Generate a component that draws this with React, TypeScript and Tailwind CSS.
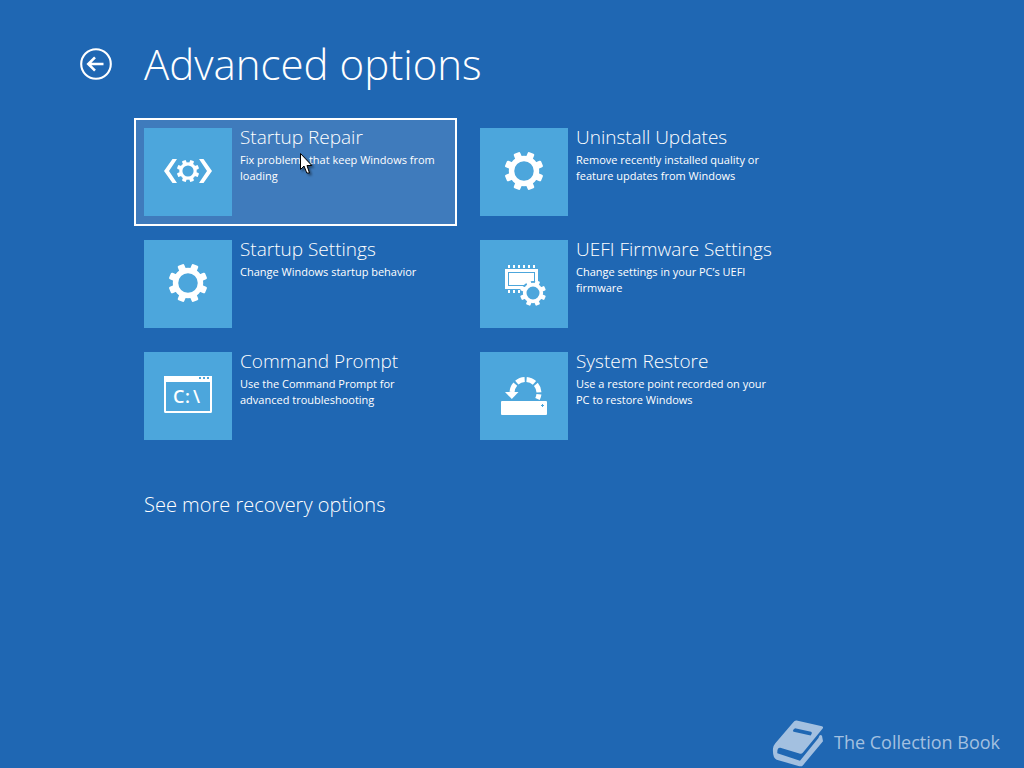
import React from "react";

interface GearProps {
  cx: number;
  cy: number;
  size: number;
}

// Eight-toothed gear, "size" is the radius to the tip of a tooth
function Gear({ cx, cy, size }: GearProps) {
  const teeth = [22.5, 67.5, 112.5, 157.5, 202.5, 247.5, 292.5, 337.5];
  return (
    <g transform={`translate(${cx} ${cy}) scale(${size / 20})`}>
      <circle r="12.8" fill="none" stroke="white" strokeWidth="5.6" />
      {teeth.map((angle) => (
        <rect
          key={angle}
          x="-3.6"
          y="-20"
          width="7.2"
          height="8"
          rx="1.4"
          fill="white"
          transform={`rotate(${angle})`}
        />
      ))}
    </g>
  );
}

function RepairIcon() {
  return (
    <>
      <path d="M20 43 28.500 31H33L25 43 33 55H28.500Z" fill="white" />
      <path d="M68 43 59.500 31H55L63 43 55 55H59.500Z" fill="white" />
      <Gear cx={44} cy={43} size={11.2} />
    </>
  );
}

function FirmwareIcon() {
  return (
    <>
      <rect x="25" y="29" width="33" height="20" fill="white" />
      <rect x="28.500" y="32.500" width="26" height="13" fill="none" stroke="#4ca6dc" />
      {[28, 33, 38, 43, 48, 53].map((x) => (
        <rect key={x} x={x} y="25" width="2" height="3" fill="white" />
      ))}
      {[28, 33, 38].map((x) => (
        <rect key={x} x={x} y="50" width="2" height="3" fill="white" />
      ))}
      <circle cx="53" cy="53" r="12" fill="#4ca6dc" />
      <Gear cx={53} cy={53} size={13} />
    </>
  );
}

function PromptIcon() {
  return (
    <>
      <rect x="21" y="25" width="46" height="35" rx="0.5" fill="none" stroke="white" strokeWidth="2" />
      <rect x="20" y="24" width="48" height="6" fill="white" />
      {[55, 59, 63].map((x) => (
        <rect key={x} x={x} y="25" width="2" height="2" fill="#4ca6dc" />
      ))}
      <text x="29 41 49" y="51" className="fill-white font-['Open_Sans'] text-[18px] font-semibold">
        C:\
      </text>
    </>
  );
}

function RestoreIcon() {
  return (
    <>
      <path
        d="M32 41A13.500 13.500 0 0 1 59 41Q59 44 57.500 47"
        fill="none"
        stroke="white"
        strokeWidth="5"
        strokeDasharray="8.600 2"
        strokeDashoffset="-1"
      />
      <path d="M25 40H38.500L31.800 47Z" fill="white" />
      <rect x="21" y="49" width="46" height="14" rx="1" fill="white" />
      <path d="M62.500 52V55M61 53.500H64" stroke="#4ca6dc" />
    </>
  );
}

const options = [
  {
    title: "Startup Repair",
    description: "Fix problems that keep Windows from loading",
    icon: <RepairIcon />,
    selected: true,
  },
  {
    title: "Uninstall Updates",
    description: "Remove recently installed quality or feature updates from Windows",
    icon: <Gear cx={44} cy={43} size={19.5} />,
  },
  {
    title: "Startup Settings",
    description: "Change Windows startup behavior",
    icon: <Gear cx={44} cy={43} size={19.5} />,
  },
  {
    title: "UEFI Firmware Settings",
    description: "Change settings in your PC’s UEFI firmware",
    icon: <FirmwareIcon />,
  },
  {
    title: "Command Prompt",
    description: "Use the Command Prompt for advanced troubleshooting",
    icon: <PromptIcon />,
  },
  {
    title: "System Restore",
    description: "Use a restore point recorded on your PC to restore Windows",
    icon: <RestoreIcon />,
  },
];

export default function App() {
  return (
    <div className="relative flex min-h-screen flex-col bg-[#1f67b3] font-['Open_Sans',sans-serif] text-white">
      <header className="flex items-center gap-8 px-20 pt-9">
        <button type="button" aria-label="Back" className="size-8 shrink-0">
          <svg viewBox="0 0 32 32" className="size-8" fill="none" stroke="white">
            <circle cx="16" cy="16" r="14.800" strokeWidth="2.100" />
            <path d="M8.500 16H23.500M15 9.300 8.300 16 15 22.700" strokeWidth="2.600" />
          </svg>
        </button>
        <h1 className="text-[42px] leading-14 font-light">Advanced options</h1>
      </header>

      <main className="pr-6 pl-[134px]">
        <div className="mt-[26px] flex max-w-[700px] flex-wrap gap-x-[13px] gap-y-1">
          {options.map((option) => (
            <button
              key={option.title}
              type="button"
              className={`flex w-[323px] items-start gap-2 border-2 p-2 text-left ${
                option.selected ? "border-white bg-[#3f7bbc]" : "border-transparent"
              }`}
            >
              <svg viewBox="0 0 88 88" className="size-22 shrink-0 bg-[#4ca6dc]">
                {option.icon}
              </svg>
              <span className="-mt-1 flex flex-col gap-0.5 pr-2">
                <span className="text-[19px] leading-[26px] font-light whitespace-nowrap">{option.title}</span>
                <span className="text-[11px] leading-4">{option.description}</span>
              </span>
            </button>
          ))}
        </div>
        <a href="#more" className="mt-10 ml-2.5 inline-block text-[20px] leading-[30px] font-light">
          See more recovery options
        </a>
      </main>

      <footer className="mt-auto flex items-start justify-end gap-2.5 pr-6 text-[#a3c0e0]">
        <svg viewBox="24 26 156 146" className="h-[49px] w-[52px]">
          <path
            fill="currentColor"
            d="M98 30 174 47Q179 49 176 54L117 126Q113 131 106 129L49 112Q39 111 40 128L108 151 164 82V80Q168 70 174 76L177 92 117 164Q113 169 106 167L38 148Q25 142 27 114Q28 105 34 98L88 35Q92 29 98 30Z"
          />
          <path fill="#1f67b3" d="M93 53 141 64Q145 66 143 70L140 75 89 64Q85 62 88 58Z" />
        </svg>
        <span className="text-[18px] leading-[46px]">The Collection Book</span>
      </footer>

      {/* Mouse pointer */}
      <svg viewBox="0 0 16 24" className="pointer-events-none absolute top-[153px] left-[300px] h-6 w-4 drop-shadow-[2px_2px_1px_rgba(0,0,0,0.4)]">
        <path d="M0.500 0.500V16.500L4 13 6.800 20H9.500L7 12.500H11.800Z" fill="white" stroke="black" />
      </svg>
    </div>
  );
}
